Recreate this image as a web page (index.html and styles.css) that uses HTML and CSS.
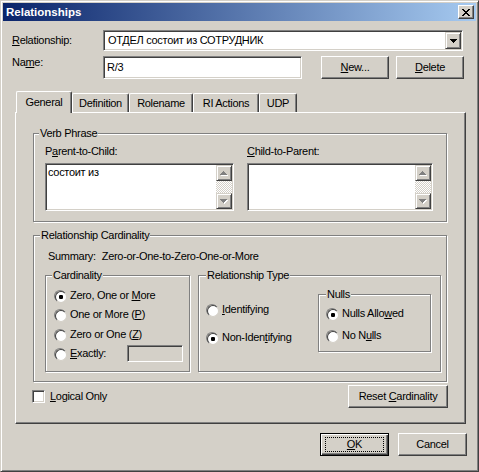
FILE: index.html
```html
<!DOCTYPE html>
<html>
<head>
<meta charset="utf-8">
<link rel="stylesheet" href="styles.css">
</head>
<body>
<div class="window">
  <div class="titlebar">
    <span class="title">Relationships</span>
    <span class="close"><svg width="8" height="7" viewBox="0 0 8 7" shape-rendering="crispEdges"><path fill="#000" d="M0 0h2v1H0zM6 0h2v1H6zM1 1h2v1H1zM5 1h2v1H5zM2 2h4v1H2zM3 3h2v1H3zM2 4h4v1H2zM1 5h2v1H1zM5 5h2v1H5zM0 6h2v1H0zM6 6h2v1H6z"/></svg></span>
  </div>
  <div class="main">
    <div class="row rel-row">
      <span class="lbl lbl-rel"><u>R</u>elationship:</span>
      <div class="combo">
        <span class="combo-text">ОТДЕЛ состоит из СОТРУДНИК</span>
        <span class="raised combo-btn"><svg width="7" height="4" viewBox="0 0 7 4" shape-rendering="crispEdges"><path fill="#000" d="M0 0h7v1H0zM1 1h5v1H1zM2 2h3v1H2zM3 3h1v1H3z"/></svg></span>
      </div>
    </div>
    <div class="row name-row">
      <span class="lbl lbl-name">Na<u>m</u>e:</span>
      <div class="edit name-edit"><span class="edit-text">R/3</span></div>
      <button class="btn btn-new"><span><u>N</u>ew...</span></button>
      <button class="btn btn-delete"><span><u>D</u>elete</span></button>
    </div>

    <div class="tabs">
      <div class="tab active t-general">General</div>
      <div class="tab t-def">Definition</div>
      <div class="tab t-role">Rolename</div>
      <div class="tab t-ri">RI Actions</div>
      <div class="tab t-udp">UDP</div>
    </div>

    <div class="panel">
      <div class="group verb">
        <div class="gtitle">Verb Phrase</div>
        <div class="verb-cols">
          <div class="vcol">
            <div class="vlabel">P<u>a</u>rent-to-Child:</div>
            <div class="memo">
              <div class="memo-text">состоит из</div>
              <div class="vscroll">
                <span class="raised sbtn"><svg width="8" height="5" viewBox="0 0 8 5" shape-rendering="crispEdges"><path fill="#fff" d="M4 1h1v1H4zM3 2h3v1H3zM2 3h5v1H2zM1 4h7v1H1z"/><path fill="#808080" d="M3 0h1v1H3zM2 1h3v1H2zM1 2h5v1H1zM0 3h7v1H0z"/></svg></span>
                <span class="track"></span>
                <span class="raised sbtn"><svg width="8" height="5" viewBox="0 0 8 5" shape-rendering="crispEdges"><path fill="#fff" d="M1 1h7v1H1zM2 2h5v1H2zM3 3h3v1H3zM4 4h1v1H4z"/><path fill="#808080" d="M0 0h7v1H0zM1 1h5v1H1zM2 2h3v1H2zM3 3h1v1H3z"/></svg></span>
              </div>
            </div>
          </div>
          <div class="vcol">
            <div class="vlabel"><u>C</u>hild-to-Parent:</div>
            <div class="memo">
              <div class="memo-text"></div>
              <div class="vscroll">
                <span class="raised sbtn"><svg width="8" height="5" viewBox="0 0 8 5" shape-rendering="crispEdges"><path fill="#fff" d="M4 1h1v1H4zM3 2h3v1H3zM2 3h5v1H2zM1 4h7v1H1z"/><path fill="#808080" d="M3 0h1v1H3zM2 1h3v1H2zM1 2h5v1H1zM0 3h7v1H0z"/></svg></span>
                <span class="track"></span>
                <span class="raised sbtn"><svg width="8" height="5" viewBox="0 0 8 5" shape-rendering="crispEdges"><path fill="#fff" d="M1 1h7v1H1zM2 2h5v1H2zM3 3h3v1H3zM4 4h1v1H4z"/><path fill="#808080" d="M0 0h7v1H0zM1 1h5v1H1zM2 2h3v1H2zM3 3h1v1H3z"/></svg></span>
              </div>
            </div>
          </div>
        </div>
      </div>

      <div class="group rc">
        <div class="gtitle">Relationship Cardinality</div>
        <div class="summary"><span>Summary:</span><span>Zero-or-One-to-Zero-One-or-More</span></div>
        <div class="subrow">
          <div class="group card">
            <div class="gtitle">Cardinality</div>
            <div class="opt c1"><span class="radio on"></span><span class="olbl">Zero, One or <u>M</u>ore</span></div>
            <div class="opt c2"><span class="radio"></span><span class="olbl">One or More (<u>P</u>)</span></div>
            <div class="opt c3"><span class="radio"></span><span class="olbl">Zero or One (<u>Z</u>)</span></div>
            <div class="opt c4"><span class="radio"></span><span class="olbl"><u>E</u>xactly:</span><span class="edit exact"></span></div>
          </div>
          <div class="group reltype">
            <div class="gtitle">Relationship Type</div>
            <div class="rt-body">
              <div class="rt-col">
                <div class="opt i1"><span class="radio"></span><span class="olbl"><u>I</u>dentifying</span></div>
                <div class="opt i2"><span class="radio on"></span><span class="olbl">Non-Iden<u>t</u>ifying</span></div>
              </div>
              <div class="group nulls">
                <div class="gtitle">Nulls</div>
                <div class="opt n1"><span class="radio on"></span><span class="olbl">Nulls Allo<u>w</u>ed</span></div>
                <div class="opt n2"><span class="radio"></span><span class="olbl">No N<u>u</u>lls</span></div>
              </div>
            </div>
          </div>
        </div>
      </div>

      <div class="bottom-row">
        <span class="check"></span>
        <span class="check-lbl"><u>L</u>ogical Only</span>
        <button class="btn btn-reset"><span>Reset <u>C</u>ardinality</span></button>
      </div>
    </div>

    <div class="footer">
      <button class="btn btn-ok"><span class="focus"><span><u>O</u>K</span></span></button>
      <button class="btn btn-cancel"><span>Cancel</span></button>
    </div>
  </div>
</div>
</body>
</html>
```

FILE: styles.css
```css
* {
  box-sizing: border-box;
  margin: 0;
  padding: 0;
}

body {
  font-family: "Liberation Sans", Arial, sans-serif;
  font-size: 11px;
  line-height: 13px;
  letter-spacing: -0.3px;
  color: #000;
  background: #D4D0C8;
}

u {
  text-decoration: underline;
}

.window {
  width: 479px;
  height: 472px;
  background: #D4D0C8;
  border: 1px solid;
  border-color: #D4D0C8 #404040 #404040 #D4D0C8;
  box-shadow: inset 1px 1px #fff, inset -1px -1px #808080;
  padding: 2px;
  display: flex;
  flex-direction: column;
}

/* title bar */
.titlebar {
  height: 18px;
  flex: none;
  display: flex;
  align-items: center;
  justify-content: space-between;
  padding: 0 2px;
  background: linear-gradient(90deg, #0A246A, #A6CAF0);
}

.title {
  color: #fff;
  font-weight: bold;
  font-size: 11.5px;
  letter-spacing: 0;
  margin-left: 1px;
}

.close {
  width: 16px;
  height: 14px;
  display: flex;
  align-items: center;
  justify-content: center;
  background: #D4D0C8;
  border: 1px solid;
  border-color: #fff #404040 #404040 #fff;
  box-shadow: inset -1px -1px #808080;
}

/* common 3D */
.raised {
  background: #D4D0C8;
  border: 1px solid;
  border-color: #D4D0C8 #404040 #404040 #D4D0C8;
  box-shadow: inset 1px 1px #fff, inset -1px -1px #808080;
}

.edit,
.combo,
.memo {
  background: #fff;
  border: 1px solid;
  border-color: #808080 #fff #fff #808080;
  box-shadow: inset 1px 1px #404040, inset -1px -1px #D4D0C8;
}

.btn {
  font: inherit;
  letter-spacing: inherit;
  color: #000;
  width: 68px;
  height: 23px;
  background: #D4D0C8;
  border: 1px solid;
  border-color: #fff #404040 #404040 #fff;
  box-shadow: inset -1px -1px #808080;
  display: flex;
  align-items: center;
  justify-content: center;
  flex: none;
}

/* main area */
.main {
  flex: 1;
  padding: 9px 0 0 9px;
  display: flex;
  flex-direction: column;
}

.row {
  display: flex;
}

.rel-row {
  height: 21px;
}

.lbl {
  width: 91px;
  flex: none;
}

.lbl-rel {
  margin-top: 4px;
}

.combo {
  width: 360px;
  height: 21px;
  padding: 1px;
  display: flex;
  align-items: center;
}

.combo-text {
  flex: 1;
  padding-left: 3px;
}

.combo-btn {
  width: 16px;
  height: 17px;
  display: flex;
  align-items: center;
  justify-content: center;
  align-self: stretch;
}

.name-row {
  margin-top: 5px;
  height: 23px;
}

.name-edit {
  width: 199px;
  height: 23px;
  display: flex;
  align-items: center;
  flex: none;
}

.edit-text {
  padding-left: 3px;
}

.btn-new {
  margin-left: 19px;
}

.btn-delete {
  margin-left: 7px;
}

/* tabs */
.tabs {
  display: flex;
  align-items: flex-end;
  height: 21px;
  margin: 12px 0 0 4px;
}

.tab {
  height: 19px;
  border: 1px solid;
  border-bottom: 0;
  border-color: #fff #404040 #404040 #fff;
  border-radius: 2px 2px 0 0;
  box-shadow: inset -1px 0 #808080;
  display: flex;
  align-items: center;
  justify-content: center;
  background: #D4D0C8;
}

.tab.active {
  height: 22px;
  margin-bottom: -1px;
  position: relative;
  z-index: 1;
}

.t-general { width: 56px; }
.t-def { width: 57px; }
.t-role { width: 64px; }
.t-ri { width: 66px; }
.t-udp { width: 38px; }

.panel {
  width: 451px;
  height: 312px;
  margin-left: 3px;
  border: 1px solid;
  border-color: #fff #404040 #404040 #fff;
  box-shadow: inset -1px -1px #808080;
  padding: 20px 18px 0 17px;
}

/* group boxes */
.group {
  border: 1px solid #808080;
  box-shadow: 1px 1px #fff, inset 1px 1px #fff;
}

.gtitle {
  display: table;
  margin: -7px 0 0 6px;
  padding: 0 1px;
  background: #D4D0C8;
}

.verb {
  width: 414px;
  height: 89px;
}

.verb .gtitle {
  margin-left: 5px;
}

.verb-cols {
  display: grid;
  grid-template-columns: 189px 186px;
  column-gap: 13px;
  margin: 5px 0 0 11px;
}

.vlabel {
  margin-bottom: 5px;
}

.memo {
  height: 48px;
  padding: 1px;
  display: flex;
}

.memo-text {
  flex: 1;
  padding: 1px 0 0 1px;
}

.vscroll {
  width: 16px;
  display: flex;
  flex-direction: column;
}

.sbtn {
  height: 16px;
  display: flex;
  align-items: center;
  justify-content: center;
  flex: none;
}

.track {
  flex: 1;
  background: repeating-conic-gradient(#D4D0C8 0 25%, #fff 0 50%) 0 0 / 2px 2px;
}

.rc {
  width: 414px;
  height: 147px;
  margin-top: 13px;
}

.summary {
  display: flex;
  gap: 6px;
  margin: 8px 0 0 14px;
}

.subrow {
  display: flex;
  margin: 12px 0 0 11px;
}

.card {
  width: 145px;
  height: 97px;
}

.opt {
  display: flex;
  align-items: center;
  height: 13px;
}

.card .opt {
  margin-left: 8px;
  margin-right: 6px;
}

.radio {
  width: 12px;
  height: 12px;
  flex: none;
  border-radius: 50%;
  border: 1px solid;
  border-color: #808080 #fff #fff #808080;
}

.radio::before {
  content: "";
  display: block;
  width: 10px;
  height: 10px;
  border-radius: 50%;
  border: 1px solid;
  border-color: #404040 #D4D0C8 #D4D0C8 #404040;
  background: #fff;
}

.radio.on::before {
  background: radial-gradient(circle at 50% 50%, #000 0 2px, #fff 2.4px);
}

.olbl {
  margin-left: 4px;
  white-space: nowrap;
}

.c1 { margin-top: 7px; }
.c2 { margin-top: 6px; }
.c3 { margin-top: 7px; }
.card .c4 { margin-top: 4px; height: 17px; }

.exact {
  width: 56px;
  height: 17px;
  margin-left: auto;
  background: #D4D0C8;
}

.reltype {
  width: 243px;
  height: 97px;
  margin-left: 8px;
}

.reltype > .gtitle {
  margin-left: 7px;
}

.rt-body {
  display: flex;
}

.rt-col {
  padding-left: 7px;
}

.i1 { margin-top: 21px; }
.i2 { margin-top: 15px; }

.nulls {
  width: 113px;
  height: 58px;
  margin: 12px 9px 0 auto;
}

.nulls > .gtitle {
  margin-left: 7px;
}

.nulls .opt {
  margin-left: 7px;
}

.n1 { margin-top: 6px; }
.nulls .n2 { margin-top: 9px; }

.bottom-row {
  display: flex;
  align-items: center;
  height: 23px;
  margin-top: 3px;
}

.check {
  width: 13px;
  height: 13px;
  margin-left: -1px;
  background: #fff;
  border: 1px solid;
  border-color: #808080 #fff #fff #808080;
  box-shadow: inset 1px 1px #404040, inset -1px -1px #D4D0C8;
}

.check-lbl {
  margin-left: 5px;
}

.btn-reset {
  width: 100px;
  margin-left: auto;
  margin-right: -1px;
}

/* footer */
.footer {
  display: flex;
  justify-content: flex-end;
  gap: 9px;
  margin: 9px 9px 0 0;
}

.btn-ok,
.btn-cancel {
  width: 69px;
}

.btn-ok {
  border: 1px solid #000;
  box-shadow: inset 1px 1px #fff, inset -1px -1px #404040, inset -2px -2px #808080;
  padding: 3px 4px;
  align-items: stretch;
}

.focus {
  flex: 1;
  border: 1px dotted #000;
  display: flex;
  align-items: center;
  justify-content: center;
}
```
